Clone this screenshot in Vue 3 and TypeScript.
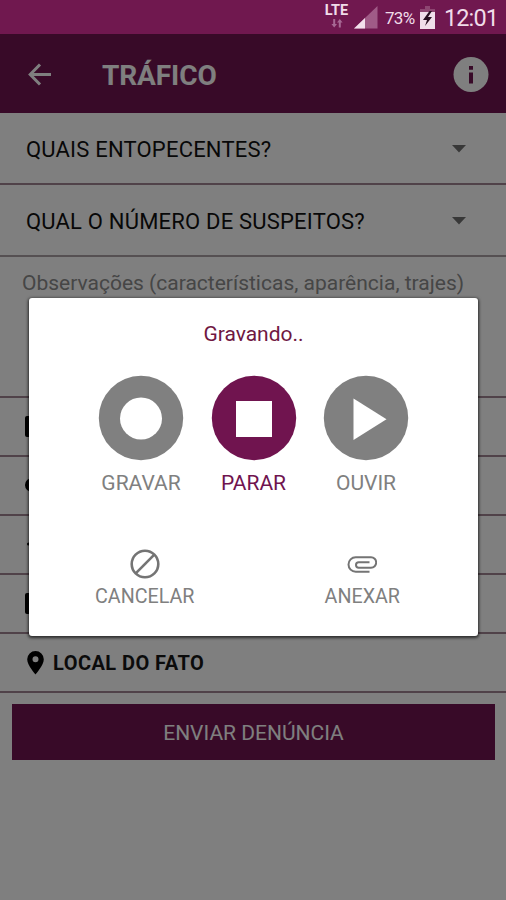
<script setup lang="ts">
interface Field { label: string }
interface Attachment { name: string; path: string }
interface Action { name: string; label: string; active: boolean }

const fields: Field[] = [
  { label: 'QUAIS ENTOPECENTES?' },
  { label: 'QUAL O NÚMERO DE SUSPEITOS?' },
]

const attachments: Attachment[] = [
  { name: 'photo', path: 'M2 1h18a2 2 0 0 1 2 2v17a2 2 0 0 1-2 2H2a2 2 0 0 1-2-2V3a2 2 0 0 1 2-2z' },
  { name: 'video', path: 'M7 4a7 7 0 1 1 0 14a7 7 0 0 1 0-14z' },
  { name: 'audio', path: 'M3.5 9.5a1.5 1.5 0 1 1 0 3a1.5 1.5 0 0 1 0-3z' },
  { name: 'file', path: 'M2 1h18a2 2 0 0 1 2 2v17a2 2 0 0 1-2 2H2a2 2 0 0 1-2-2V3a2 2 0 0 1 2-2z' },
]

const actions: Action[] = [
  { name: 'record', label: 'GRAVAR', active: false },
  { name: 'stop', label: 'PARAR', active: true },
  { name: 'play', label: 'OUVIR', active: false },
]
</script>

<template>
  <div class="screen">
    <div class="status">
      <div class="network">
        <span class="lte">LTE</span>
        <svg class="arrows" width="12" height="9" viewBox="0 0 12 9"><path d="M2.2 0h2v5H6L3.2 8.5.4 5h1.8zM7.8 8.5h2v-5h1.8L8.8 0 6 3.5h1.8z" /></svg>
      </div>
      <svg class="signal" width="24" height="24" viewBox="0 0 24 24">
        <path d="M23.500 1V23.500H0z" fill="#a05b87" />
        <path d="M11 13V23.500H0z" fill="#f3dfec" />
      </svg>
      <span class="percent">73%</span>
      <svg class="battery" width="15" height="23" viewBox="0 0 15 23">
        <path d="M5 0h5v3h5v5H0V3h5z" fill="#8d4671" />
        <path d="M0 6h15v17H0z" fill="#f0deea" />
        <path d="M9.500 5 3 14h4l-2 6 7-9H8l4-6z" fill="#281021" />
      </svg>
      <span class="clock">12:01</span>
    </div>

    <main class="page">
      <header class="bar">
        <svg class="back" width="24" height="24" viewBox="0 0 24 24"><path d="M23 11.500H2.500M12 1.500 2.200 11.500 12 21.500" /></svg>
        <h1 class="heading">TRÁFICO</h1>
        <svg class="info" width="36" height="36" viewBox="0 0 36 36">
          <circle cx="18" cy="17.500" r="17.500" fill="#fff" />
          <path d="M16 9h4v3.700h-4zM16 15.500h4v11h-4z" fill="#701450" />
        </svg>
      </header>
      <div v-for="field in fields" :key="field.label" class="field">
        <span class="field-label">{{ field.label }}</span>
        <svg class="caret" width="14" height="8" viewBox="0 0 14 8"><path d="M0 0h14L7 7.500z" /></svg>
      </div>
      <div class="notes">Observações (características, aparência, trajes)</div>
      <div v-for="item in attachments" :key="item.name" class="row">
        <svg width="23" height="23" viewBox="0 0 23 23"><path :d="item.path" /></svg>
      </div>
      <div class="row place">
        <svg class="pin" width="17" height="24" viewBox="0 0 17 24"><path fill-rule="evenodd" d="M8.500 0A8.300 8.300 0 0 0 .2 8.300C.2 14.300 8.500 23.500 8.500 23.500s8.300-9.200 8.300-15.200A8.300 8.300 0 0 0 8.500 0zm0 5.300a3 3 0 1 1 0 6 3 3 0 0 1 0-6z" /></svg>
        <span class="place-label">LOCAL DO FATO</span>
      </div>
      <button class="submit"><span>ENVIAR DENÚNCIA</span></button>

      <div class="scrim">
        <section class="dialog">
          <h2 class="title">Gravando..</h2>
          <div class="actions">
            <div v-for="action in actions" :key="action.name" class="action" :class="[action.name, { active: action.active }]">
              <svg width="86" height="86" viewBox="0 0 86 86">
                <circle cx="43" cy="43" r="42.200" fill="currentColor" />
                <circle v-if="action.name === 'record'" cx="43" cy="43.500" r="21" fill="#fff" />
                <path v-else-if="action.name === 'stop'" d="M25 26h36v36H25z" fill="#fff" />
                <path v-else d="M30.500 23.500 63.500 44.200 30.500 65z" fill="#fff" />
              </svg>
              <span class="action-label">{{ action.label }}</span>
            </div>
          </div>
          <div class="footer">
            <div class="option cancel">
              <svg width="30" height="30" viewBox="0 0 30 30"><circle cx="15" cy="15" r="13.300" stroke-width="2.600" /><path d="M5.700 24.300 24.300 5.700" stroke-width="2.600" /></svg>
              <span>CANCELAR</span>
            </div>
            <div class="option attach">
              <svg width="30" height="30" viewBox="0 0 30 30"><path d="M22.500 22.700H8.700a7.200 7.200 0 0 1 0-14.400H24a5.200 5.200 0 0 1 0 10.400H11.700a2.700 2.700 0 0 1 0-5.400h10.800" stroke-width="2" /></svg>
              <span>ANEXAR</span>
            </div>
          </div>
        </section>
      </div>
    </main>
  </div>
</template>

<style>
body { margin: 0; background: #808080; }
</style>

<style scoped>
.screen {
  box-sizing: border-box;
  width: 506px;
  height: 900px;
  overflow: hidden;
  display: flex;
  flex-direction: column;
  font-family: Roboto, "Liberation Sans", sans-serif;
}
.status {
  height: 34px;
  flex: none;
  box-sizing: border-box;
  padding-right: 9px;
  display: flex;
  align-items: center;
  justify-content: flex-end;
  background: #70184f;
  color: #f0dce9;
}
.network { display: flex; flex-direction: column; align-items: center; width: 25px; margin: 0 5px 2px 0; }
.lte { font-size: 14.5px; line-height: 14px; font-weight: 700; }
.arrows { margin-top: 1px; fill: #a76994; }
.signal { margin-right: 7px; }
.percent { width: 31px; margin-right: 4px; padding-top: 1px; font-size: 17px; letter-spacing: -0.7px; white-space: nowrap; }
.battery { margin-right: 9px; }
.clock { width: 53px; padding-top: 1px; font-size: 23.5px; letter-spacing: -0.9px; white-space: nowrap; }
.page { flex: 1; position: relative; background: #fff; }
.bar {
  height: 79px;
  box-sizing: border-box;
  display: flex;
  align-items: center;
  padding: 2px 17px 0 28px;
  background: #701450;
  color: #fff;
}
.back { fill: none; stroke: #fff; stroke-width: 3; }
.heading { flex: 1; margin: 0 0 0 50px; padding-top: 2px; font-size: 28px; line-height: 34px; font-weight: 700; letter-spacing: -0.1px; }
.field {
  height: 72px;
  box-sizing: border-box;
  display: flex;
  align-items: center;
  justify-content: space-between;
  padding: 2px 40px 0 26px;
  border-bottom: 2px solid #a08592;
  font-size: 22px;
  letter-spacing: 0.2px;
  color: #111;
}
.field + .field { border-color: #aaa0a5; }
.caret { fill: #707070; }
.notes {
  height: 141px;
  box-sizing: border-box;
  padding: 12px 0 0 22px;
  border-bottom: 2px solid #a08592;
  font-size: 21px;
  line-height: 28px;
  color: #8c8c8c;
  white-space: nowrap;
}
.row {
  height: 59px;
  box-sizing: border-box;
  display: flex;
  align-items: center;
  padding-left: 25px;
  border-bottom: 2px solid #a08592;
}
.place { padding: 1px 0 0 27px; }
.place-label { margin-left: 9px; font-size: 20px; font-weight: 700; letter-spacing: 0.45px; color: #171717; }
.submit {
  display: flex;
  align-items: center;
  justify-content: center;
  width: 483px;
  height: 56px;
  margin: 11px 0 0 12px;
  padding: 2px 0 0;
  border: 0;
  background: #701450;
  color: #fff;
  font-family: inherit;
  font-size: 21px;
}
.scrim {
  position: absolute;
  inset: 0;
  display: flex;
  align-items: flex-start;
  padding: 264px 0 0 29px;
  background: rgba(0, 0, 0, 0.5);
}
.dialog {
  box-sizing: border-box;
  width: 449px;
  height: 338px;
  padding-top: 22px;
  border-radius: 3px;
  background: #fff;
  box-shadow: 0 1px 3px 1px rgba(0, 0, 0, 0.65);
  color: #808080;
}
.title { margin: 0; text-align: center; font-size: 21px; line-height: 28px; font-weight: 400; color: #701842; }
.actions { display: flex; justify-content: center; margin-top: 27px; }
.action { width: 112.500px; display: flex; flex-direction: column; align-items: center; }
.active { color: #70144f; }
.action-label { margin-top: 9px; font-size: 21px; line-height: 26px; }
.footer { display: flex; justify-content: space-between; margin: 53px 78px 0 66px; }
.option { display: flex; flex-direction: column; align-items: center; font-size: 19.7px; line-height: 26px; }
.option svg { fill: none; stroke: #747474; margin-bottom: 5px; }
</style>
